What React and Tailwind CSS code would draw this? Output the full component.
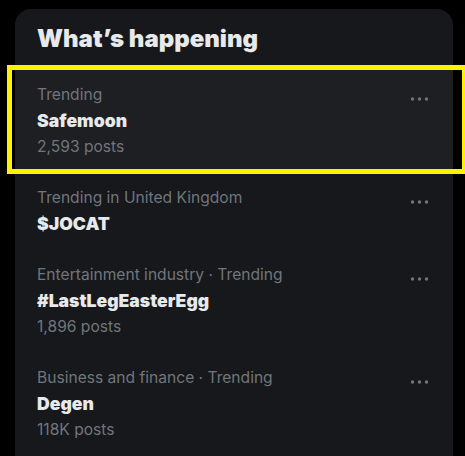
import React from 'react';

const trends = [
  { category: 'Trending', title: 'Safemoon', posts: '2,593 posts', active: true },
  { category: 'Trending in United Kingdom', title: '$JOCAT' },
  { category: 'Entertainment industry · Trending', title: '#LastLegEasterEgg', posts: '1,896 posts' },
  { category: 'Business and finance · Trending', title: 'Degen', posts: '118K posts' },
];

const MoreDots = () => (
  <svg width="20" height="6" viewBox="0 0 20 6" className="mt-[14px] mr-[2px] shrink-0">
    <circle cx="3.5" cy="3" r="1.7" fill="#71767b" />
    <circle cx="10.5" cy="3" r="1.7" fill="#71767b" />
    <circle cx="17.5" cy="3" r="1.7" fill="#71767b" />
  </svg>
);

const TrendRow = ({ trend }) => (
  <div className={`flex justify-between px-[22px] py-[12.5px] ${trend.active ? 'bg-[#1d1f23]' : ''}`}>
    <div className="flex flex-col">
      <span className="text-[15.6px] leading-[26px] text-[#71767b]">{trend.category}</span>
      <span className="text-[17.6px] leading-[26px] font-black text-[#e7e9ea]">{trend.title}</span>
      {trend.posts && (
        <span className="text-[15.6px] leading-[26px] text-[#71767b]">{trend.posts}</span>
      )}
    </div>
    <MoreDots />
  </div>
);

export default function App() {
  return (
    <div
      className="relative w-[465px] h-[456px] overflow-hidden bg-black pt-[9px] pl-[15px]"
      style={{ fontFamily: 'Inter, "Noto Sans", sans-serif' }}
    >
      <div className="w-[438px] h-[500px] rounded-2xl bg-[#16181c]">
        <div className="h-[60.5px] flex items-center px-[22px]">
          <h2 className="text-[24px] font-black text-[#e7e9ea]">What’s happening</h2>
        </div>
        {trends.map((t) => (
          <TrendRow key={t.title} trend={t} />
        ))}
      </div>

      {/* highlight annotation */}
      <div className="absolute left-[7px] top-[65px] w-[460px] h-[109px] border-[5px] border-[#fff200]" />
    </div>
  );
}
